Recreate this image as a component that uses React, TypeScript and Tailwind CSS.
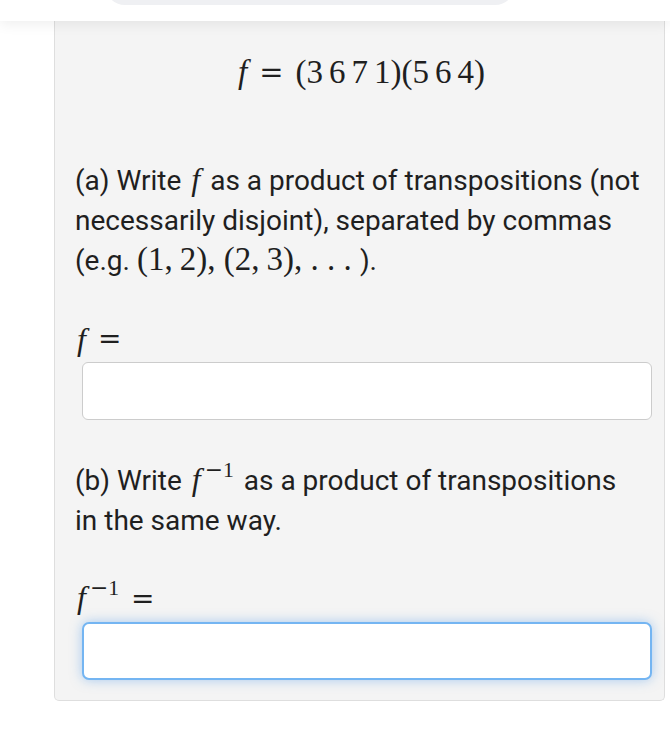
import React from 'react';

const serif = "font-['Liberation_Serif','Times_New_Roman',serif]";
const eqFont = "font-['DejaVu_Serif',serif]";

// italic math f, optionally with the -1 exponent
function F({ inv = false }: { inv?: boolean }) {
  return (
    <span className={`${serif} italic leading-none`}>
      f
      {inv && (
        <span className={`${serif} not-italic inline-block text-[0.68em] leading-none ml-[4px] relative -top-[0.62em]`}>
          <span className={eqFont}>−</span>1
        </span>
      )}
    </span>
  );
}

function Tuple({ a, b }: { a: number; b: number }) {
  return (
    <span className={`${serif} text-[33px] leading-none`}>
      ({a},<span className="ml-[7px]">{b}</span>)
    </span>
  );
}

export default function App() {
  return (
    <div className="min-h-screen bg-white font-['Roboto','Liberation_Sans',sans-serif] text-[#1f1f1f]">
      {/* top bar, scrolled mostly out of view */}
      <header className="relative z-10 h-[21px] bg-white shadow-[0_3px_14px_rgba(0,0,0,0.07)] overflow-hidden">
        <div className="ml-[105px] -mt-[35px] h-[40px] w-[410px] rounded-full bg-[#eff0f3]" />
      </header>

      <div className="flex">
        <main className="ml-[54px] w-[611px] bg-[#f4f4f4] border border-t-0 border-[#dedede] rounded-b-[5px] pl-[20px] pr-[12px] pb-[20px]">
          {/* display math */}
          <div className={`mt-[31px] h-[40px] flex items-center justify-center pr-[4px] ${serif} text-[33px] leading-none`}>
            <span className="italic">f</span>
            <span className={`${eqFont} mx-[12px] text-[29px]`}>=</span>
            <span>
              (<span className="tracking-[6px]">367</span>1)(<span className="tracking-[6px]">56</span>4)
            </span>
          </div>

          {/* part a */}
          <p className="mt-[67px] text-[28px] leading-[40px]">
            (a) Write <span className="text-[32px] mx-[3px]"><F /></span> as a product of transpositions (not
            necessarily disjoint), separated by commas (e.g.{' '}
            <Tuple a={1} b={2} />
            <span className={`${serif} text-[33px] leading-none`}>, </span>
            <Tuple a={2} b={3} />
            <span className={`${serif} text-[33px] leading-none`}>, . . . </span>
            ).
          </p>

          <div className="mt-[38px] h-[40px] flex items-center pl-[2px] text-[32px]">
            <F />
            <span className={`${eqFont} leading-none ml-[12px] text-[28px]`}>=</span>
          </div>
          <input
            type="text"
            className="block mt-[3px] ml-[7px] w-[570px] h-[58px] bg-white border-[1.5px] border-[#cccccc] rounded-[6px] outline-none px-3 text-[20px]"
          />

          {/* part b */}
          <p className="mt-[39px] text-[28px] leading-[40px]">
            (b) Write <span className="text-[32px] mx-[3px]"><F inv /></span> as a product of transpositions
            <br />
            in the same way.
          </p>

          <div className="mt-[36px] h-[40px] flex items-end pb-[4px] pl-[2px] text-[32px]">
            <F inv />
            <span className={`${eqFont} leading-none ml-[12px] text-[28px]`}>=</span>
          </div>
          <input
            type="text"
            className="block mt-[5px] ml-[7px] w-[570px] h-[58px] bg-white border-2 border-[#74b5f2] rounded-[7px] outline-none shadow-[0_0_12px_rgba(90,160,235,0.5)] px-3 text-[20px]"
          />
        </main>
      </div>
    </div>
  );
}
